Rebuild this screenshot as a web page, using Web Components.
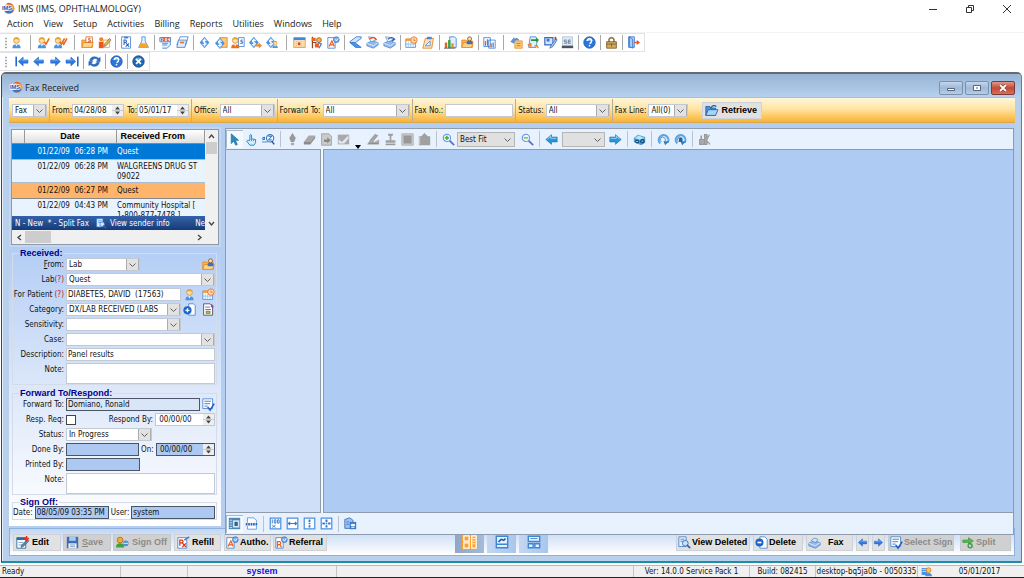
<!DOCTYPE html>
<html lang="en">
<head>
<meta charset="utf-8">
<title>IMS (IMS, OPHTHALMOLOGY)</title>
<style>
html,body{margin:0;height:100%}
body{background:#fff;font:8px/13px "DejaVu Sans Condensed","Liberation Sans",Arial,sans-serif;color:#111}
</style>
</head>
<body>
<ims-app></ims-app>
<script>
/* ---------- icons, all on a 16x16 grid ---------- */
const page='<path d="M3 1h7l3 3v11H3z" fill="#fff" stroke="#3f7fd0"/><path d="M10 1v3h3" fill="#cfe2fa" stroke="#3f7fd0"/>';
const user=(x=0,c='#4a94e0')=>`<g transform="translate(${x})"><path d="M3 15c0-4 2-5 5-5s5 1 5 5z" fill="${c}"/><path d="M6.500 10h3L8 13z" fill="#fff"/><circle cx="8" cy="5.500" r="3.500" fill="#ffdca8" stroke="#d8922a"/><path d="M4.500 5C4 .5 12 .5 11.500 5 10 3.500 6 3.500 4.500 5z" fill="#e8a52c"/></g>`;
const check=(x=0)=>`<path d="M${9+x} 7l2 3 4-7" fill="none" stroke="#ec6a1c" stroke-width="2"/>`;
const dollar='<path d="M8 1l6 7-6 7-6-7z" fill="#4b93e8"/><path d="M10.500 5.500c-4-2-6 1.500-2.500 2.500s2 4-2.500 2.500M8 3v10" fill="none" stroke="#fff" stroke-width="1.300"/>';
const folder='<path d="M1 5h5l1 1h7v8H1z" fill="#ffb545" stroke="#e6821e"/><path d="M1 14l2-6h12l-2 6z" fill="#ffd588" stroke="#e6821e"/>';
const printer='<path d="M1 9l6-3 8 2v3l-6 4-8-3z" fill="#8fb8ee" stroke="#4678c0" stroke-width=".8"/><path d="M1 9l8 3 6-4" fill="none" stroke="#fff" stroke-width=".8"/>';
const cal='<path d="M1 4h12v10H1z" fill="#fff" stroke="#4a86d8"/><path d="M1 3h12v3H1z" fill="#f59a2b"/><path d="M4 7v7M7 7v7M10 7v7M1 10h12" stroke="#7faee8" stroke-width=".8"/>';
const clock='<circle cx="11" cy="5" r="4" fill="#ffd9b0" stroke="#e8701c"/><path d="M11 3v2.500h2" fill="none" stroke="#e8701c"/>';
const mag=s=>`<path d="M9 9l6 6" stroke="#5b70c8" stroke-width="2.200"/><circle cx="6" cy="6" r="4.500" fill="#eaf6ff" stroke="#6c8fe8" stroke-width="1.300"/>${s}`;
const arrow='<path d="M2 8l6-5.500V6h6v4H8v3.500z" fill="#2b78e0" stroke="#1d5fc0" stroke-width=".6"/><path d="M4.500 7.500L7 5v2h6" stroke="#7cb4fa" stroke-width=".8" fill="none"/>';
const teal='<path d="M1 8l7-6v3h7v6H8v3z" fill="#2596d8" stroke="#1c6ea8" stroke-width=".7"/><path d="M3 7.500l4-3.500v2.500h7" fill="none" stroke="#a8e4ff"/>';
const frame='<path d="M1.500 1.500h13v13h-13z" fill="#fff" stroke="#4a90e0" stroke-width="1.500"/>';
const flip=s=>`<g transform="translate(16) scale(-1 1)">${s}</g>`;
const rot='<path d="M4 13A6 6 0 1 1 13 12" fill="none" stroke="#5aa6e0" stroke-width="2.600"/><path d="M5.500 11A3.200 3.200 0 1 1 9.500 10.500" fill="none" stroke="#3a78b8"/><path d="M8 10h7l-5 5z" fill="#2b7fc8"/>';
const I={
logo:'<circle cx="9" cy="8" r="6.500" fill="#f49a4a"/><path d="M3 12q6 5 11-1l-1-3-8 1z" fill="#3b74c8"/><path d="M5 2q5-3 9 2z" fill="#e2622a"/><text x="0" y="10" font-size="7" font-weight="700" fill="#1d4fae" stroke="#fff" stroke-width="1.600" paint-order="stroke">IMS</text>',
userDb:'<path d="M1 3h8v10H1z" fill="#4b8ee0"/><path d="M2 5h6M2 8h6" stroke="#fff"/><circle cx="11" cy="6" r="3.500" fill="#ffc45a" stroke="#c8741c"/><path d="M6 15q0-5 5-5t5 5z" fill="#4b8ee0"/>',
user:user(),
userCheck:user(-2)+check(),
userCheck2:user(-3)+check(-2)+check(1),
folderS:folder+'<path d="M6 1h8v7H6z" fill="#fff" stroke="#d86a20"/><path d="M11.500 3h-2v2h2v2h-3" fill="none" stroke="#e03a1c"/>',
manPencil:'<path d="M1 15V7h6v8z" fill="#e85a1c"/><circle cx="4" cy="4" r="2.500" fill="#f0812a"/><path d="M7 5h7v9H7z" fill="#fff" stroke="#f09a2a"/><path d="M7 13l1-3 6-7 2 2-6 7z" fill="#f7b23c" stroke="#555" stroke-width=".7"/>',
rx:'<path d="M2 1h11v14H2z" fill="#fff" stroke="#3f7fd0"/><path d="M5 1h5v2H5z" fill="#3f7fd0"/><path d="M5 11V5h2q2 1.500 0 3H5m2 0l4 5m0-4l-4 4" fill="none" stroke="#2a62c0" stroke-width="1.300"/>',
rxRed:'<path d="M1 2h11v13H1z" fill="#fff" stroke="#3f7fd0"/><path d="M3.500 12V5h3q2 2 0 3.500h-3m3 0l4.500 5m0-4.500l-4.500 4.500" fill="none" stroke="#d83418" stroke-width="1.500"/><path d="M9 5l6-4" stroke="#3f7fd0" stroke-width="2"/>',
flask:'<path d="M6 1h4v5l4 8H2l4-8z" fill="#eaf4ff" stroke="#3f86dc"/><path d="M4.500 9h7l2.500 5.500H2z" fill="#f8a424"/>',
doc:'<path d="M1 2h13v9l-4 4H4" fill="#e4effd" stroke="#3f7fd0"/><path d="M1 2h13v5H1z" fill="#e4effd" stroke="#3f7fd0"/><path d="M3 3v3M5 3h2v2.500H5zM12 3h-2v2.500h2" stroke="#e0481c" fill="none" stroke-width="1.200"/><path d="M4 9h7M4 11h6" stroke="#3f7fd0"/>',
papers:'<path d="M5 1h10l-3 10H1z" fill="#fff" stroke="#3f7fd0"/><path d="M3 5h10l-2 9H1z" fill="#dcebff" stroke="#3f7fd0"/><path d="M5 8h5" stroke="#e8701c" stroke-width="2"/>',
dollar, dollarDoc:'<path d="M6 2h9v12H6z" fill="#ffc778" stroke="#e8861c"/><g transform="translate(-2 1)">'+dollar+'</g>',
userDollar:'<path d="M8 2h7v11H8z" fill="#fff" stroke="#3f7fd0"/><path d="M13 5h-2v2h2v2h-3" fill="none" stroke="#2458b8"/>'+user(-4,'#e8701c'),
dollarFlag:'<g transform="translate(-2)">'+dollar+'</g><path d="M8 10h4v-2l4 4-4 3v-2H8z" fill="#f08a2a"/>',
dollarUser:'<g transform="translate(-2)">'+dollar+'</g><g transform="translate(6 5) scale(.65)">'+user()+'</g>',
calendar:'<path d="M1 2h14v12H1z" fill="#ffe9c0" stroke="#e6881c"/><path d="M1 2h14v3H1z" fill="#3f86dc"/><path d="M3 7h10M3 9.500h10M3 12h10" stroke="#f2a63a" stroke-dasharray="2 1"/><path d="M6 8h3v3H6z" fill="#d8401c"/>',
puzzle:'<path d="M3 1v14M3 8h5" stroke="#8a4a20" stroke-width="1.500"/><path d="M2 2h5v4H2zM6 9h5v5H6z" fill="#e8602a"/><circle cx="11" cy="5" r="3" fill="#f7b23c" stroke="#a8541c"/><path d="M10 8l4 2-3 5" fill="none" stroke="#3f7fd0" stroke-width="1.500"/>',
docA:'<path d="M1 2h9v13H1z" fill="#fff" stroke="#3f7fd0"/><path d="M2.500 13L6 6l3 7M4 11h4" fill="none" stroke="#e8601c" stroke-width="1.500"/><circle cx="11.500" cy="4.500" r="3.500" fill="#7eb2f2" stroke="#2f6fc8"/><path d="M10 4l1.500 2L14 3" fill="none" stroke="#fff"/>',
docR:'<path d="M1 2h9v13H1z" fill="#fff" stroke="#3f7fd0"/><path d="M3 14V7h3q2 2 0 3.500H3m3 0l2 3.500" fill="none" stroke="#e8601c" stroke-width="1.500"/><circle cx="11.500" cy="4.500" r="3.500" fill="#7eb2f2" stroke="#2f6fc8"/><path d="M10 4l1.500 2L14 3" fill="none" stroke="#fff"/>',
fold:'<path d="M15 1H9L1 7l2 2 5-1 7-5z" fill="#cfe4ff" stroke="#2f70cc"/><path d="M1 8l7 6h7l-8-6z" fill="#4a94e8" stroke="#2f70cc"/>',
printOut:printer+'<path d="M6 7l6-2-2-3-7-1z" fill="#fff" stroke="#3f7fd0" stroke-width=".8"/><path d="M4 4q6-5 9 1" fill="none" stroke="#e8541c" stroke-width="1.800"/>',
printIn:printer+'<path d="M6 7l6-2-2-3-7-1z" fill="#fff" stroke="#3f7fd0" stroke-width=".8"/><path d="M6 4q5-4 8 0l-3 2" fill="none" stroke="#2a5cc0" stroke-width="1.800"/>',
printer:printer+'<path d="M4 6q3-5 8-2l-2 4z" fill="#d4e8fb" stroke="#4678c0" stroke-width=".8"/>',
calClock:cal+clock,
clipClock:'<path d="M4 3h10l-2 12H1z" fill="#ffe0b8" stroke="#e8801c"/><path d="M6 1h6v3H6z" fill="#4a86d8"/><path d="M4 12l6-6v6z" fill="#fff" stroke="#4a86d8"/>',
chart:'<path d="M7 1h6l2 2v11H7z" fill="#e4effd" stroke="#3f7fd0"/><path d="M1 8h3v7H1z" fill="#e8641c"/><path d="M5 5h3v10H5z" fill="#35a246"/><path d="M9 9h3v6H9z" fill="#e09a20"/><path d="M0 15h14" stroke="#555"/>',
folderUser:folder+'<path d="M7 10V7q3-3 7 0v3z" fill="#3b6fc8"/><circle cx="10.500" cy="3.500" r="2.500" fill="#ffd9a8" stroke="#8a5020"/>',
chartDoc:'<path d="M1 2h8v11H1zM7 5h8v10H7z" fill="#fff" stroke="#3f7fd0"/><path d="M3 6v6M10 9v5" stroke="#e8641c" stroke-width="1.600"/><path d="M5.500 4v8M12.500 8v6" stroke="#3f86dc" stroke-width="1.600"/>',
undoDoc:'<path d="M6 6h9v9H6z" fill="#ffd27a" stroke="#e6881c"/><path d="M8 9h5M8 12h5" stroke="#c05a1c"/><path d="M1 7l4-5v2q4-3 6 1-3-1-6 1v3z" fill="#5a96e4" stroke="#2f6fc8" stroke-width=".6"/>',
swap:'<path d="M4 1h7l2 4-2 9H2z" fill="#e4effd" stroke="#3f7fd0"/><path d="M5 4h6V2l4 3-4 3V6H5z" fill="#25963c"/><path d="M9 12h4l1 3M1 11l4-2v4z" fill="#f0a020" stroke="#f0701c"/>',
notePen:'<path d="M1 2h10v9H1z" fill="#d4e6ff" stroke="#3468c0" stroke-width="1.400"/><circle cx="5" cy="5" r="2" fill="#3b74c8"/><path d="M15 3L9 11l-2 4 4-2 5-8z" fill="#9cc4f4" stroke="#2458a8" stroke-width=".8"/><path d="M14 1v4" stroke="#e0301c" stroke-width="2"/>',
se:'<path d="M2 1h12v11H2z" fill="#e1ebf6" stroke="#a9bfd8"/><path d="M1 12h14v3H1z" fill="#4b535e"/><path d="M7 5H4v2h3v2H4M12 5H9v4h3M9 7h3" fill="none" stroke="#56708e"/>',
help:'<circle cx="8" cy="8" r="7" fill="#2a76dc" stroke="#1b51a6"/><path d="M3 6q5-6 10 0z" fill="#79b1f4"/><path d="M5.500 6q0-2.500 2.500-2.500T10.500 6 8 9.500M8 11v2" fill="none" stroke="#fff" stroke-width="1.800"/>',
lock:'<path d="M5 8V4q3-4 6 0v4" fill="none" stroke="#8c7a5a" stroke-width="2"/><path d="M2 7h12v8H2z" fill="#d3a95a" stroke="#7a5a28"/><path d="M2 10h12M8 9v4" stroke="#7a5a28"/>',
exit:'<path d="M2 1h7v13H2z" fill="#b8d6fb" stroke="#2f70cc"/><path d="M3 1l4 3v11l-4-2z" fill="#a8ccf8" stroke="#2f70cc"/><path d="M9 7h3V5l4 3-4 3V9H9z" fill="#e8541c"/>',
prev:arrow,next:flip(arrow),
first:'<path d="M1.500 2v12" stroke="#2369c8" stroke-width="2"/><g transform="translate(2)">'+arrow+'</g>',
last:flip('<path d="M1.500 2v12" stroke="#2369c8" stroke-width="2"/><g transform="translate(2)">'+arrow+'</g>'),
refresh:'<path d="M2 7q1-5 6-5 3 0 5 2l2-1v5h-5l2-2q-4-4-7 1zM14 9q-1 5-6 5-3 0-5-2l-2 1V8h5l-2 2q4 4 7-1z" fill="#2470c8" stroke="#164f98" stroke-width=".5"/>',
close:'<circle cx="8" cy="8" r="7" fill="#1f6ab8" stroke="#12427e"/><path d="M3 6q5-6 10 0z" fill="#6aaade"/><path d="M5 5l6 6M11 5l-6 6" stroke="#fff" stroke-width="2"/>',
retrieve:'<path d="M1 3h5l1 2h6v9H1z" fill="#4b92d8" stroke="#1f5fa8"/><path d="M1 14l3-7h12l-3 7z" fill="#a8d4f6" stroke="#1f5fa8"/><path d="M7 5q3-5 7-2" fill="none" stroke="#1f5fa8" stroke-width="1.500"/>',
cursor:'<path d="M4 1v12l3-3 2.500 5 2-1L9 9h4z" fill="#2a8cc0" stroke="#1a6490" stroke-width=".8"/>',
hand:'<path d="M6 9V2.500q1-1.500 2 0V7l5 1v4l-2 3H6L2 10l1-1z" fill="#d4ecff" stroke="#2f88c8" stroke-width="1.200"/><path d="M8 7v3M10.500 8v2" stroke="#2f88c8"/>',
find:'<path d="M1 8q-1-3 2-3v3zM8 4h4L8 8.500h4" fill="none" stroke="#2c6ca8" stroke-width="1.200"/><circle cx="10" cy="6.500" r="4.500" fill="none" stroke="#3378c0" stroke-width="1.300"/><path d="M12 10l3 4" stroke="#2c5a98" stroke-width="2"/><path d="M0 11h7" stroke="#3378c0"/>',
pen:'<path d="M8 0l4 6-2 5H6L4 6z" fill="#999"/><path d="M6 12h4v3H6z" fill="#aaa"/>',
eraser:'<path d="M7 3h8l-6 8H1z" fill="#a8a8a8"/><path d="M1 11h8v3H1zM9 11l6-8v3l-6 8z" fill="#8c8c8c"/>',
pageGray:'<path d="M2 1h9l3 3v11H2z" fill="#ccc" stroke="#999"/><path d="M5 8h4V5l4 4-4 4v-2H5z" fill="#888"/>',
imgGray:'<path d="M1 2h14v12H1z" fill="#aaa"/><path d="M2 8l4 3 8-8v4l-5 6H2z" fill="#e3e9f1"/>',
signGray:'<path d="M3 9L10 1l4 2-6 7z" fill="#a3a3a3"/><path d="M0 14l5-7 4 4 6-3v6z" fill="#a8a8a8"/><path d="M2 13h12" stroke="#888"/>',
stamp:'<path d="M5 1h6v2L9 4v5h5v3H2V9h5V4L5 3z" fill="#a0a0a0"/><path d="M2 13h12v2H2z" fill="#999"/>',
square:'<path d="M1 1h14v14H1z" fill="#ccc" stroke="#aaa"/><path d="M3 3h10v10H3z" fill="#989898"/>',
clipGray:'<path d="M1 4h3l4-4 4 4h3v11H1z" fill="#a0a0a0"/><path d="M2 5v9" stroke="#ddd"/>',
zoomIn:mag('<path d="M6 3.500v5M3.500 6h5" stroke="#4cb830" stroke-width="2"/>'),
zoomOut:mag('<path d="M3.500 6h5" stroke="#7cc850" stroke-width="2"/>'),
tealL:teal,tealR:flip(teal),
bino:'<path d="M1 6l5-4 9 3v7l-5 3-9-4z" fill="#4a9fd6"/><path d="M2 6l5-3 7 3-4 3z" fill="#b9e4fa"/><circle cx="5" cy="10.500" r="2.500" fill="#155080"/><circle cx="11.500" cy="10" r="2.800" fill="#155080"/><path d="M4 10.500h2M10.500 10h2" stroke="#fff"/>',
rotA:rot,rotB:rot+'<path d="M6 6h4v5H6z" fill="#2a5f98"/>',
tools:'<path d="M2 8h6v6H2zM8 2h3v12H8zM11 8l3-6M11 10l4 4" fill="#aaa" stroke="#999" stroke-width="1.400"/><path d="M4 3v5" stroke="#999" stroke-width="2"/>',
thumbs:'<path d="M1 1h14v14H1z" fill="#4b86b4"/><path d="M6 4h8v9H6z" fill="#cfe4f4"/><path d="M2 4h3M2 7h3M2 10h3M2 13h3" stroke="#e8f4ff"/><path d="M8 6h4v5H8z" fill="#345f88"/>',
pan:'<path d="M3 7V1h8l3 3v3M3 11v4h11v-4" fill="#fff" stroke="#4a90e0"/><path d="M1 9h2M4 9h2M7 9h2M10 9h2M13 9h2" stroke="#2a62b8" stroke-width="3"/>',
p100:frame+'<path d="M4 3v5M6.500 3.500h2v4h-2zM10.500 3.500h2v4h-2zM4 13l4-3M8 13l-4-3" fill="none" stroke="#3478c8" stroke-width="1.100"/>',
fitW:frame+'<path d="M3 8h10M5 6L3 8l2 2M11 6l2 2-2 2" fill="none" stroke="#2f78cc" stroke-width="1.400"/>',
fitH:frame+'<path d="M8 3v3M8 7v2M8 10v3" stroke="#2f78cc" stroke-width="2.200"/>',
fit:frame+'<path d="M8 3v3M8 10v3M3 8h3M10 8h3" stroke="#2f78cc" stroke-width="2.400"/><path d="M7 7h2v2H7z" fill="#2f78cc"/>',
faxSave:'<path d="M1 3l6-2 4 3v10H1z" fill="#9cc4f4" stroke="#3468b8"/><path d="M7 6h8v9H7z" fill="#3b78c8"/><path d="M9 9h4v2H9zM9 13h4" fill="#fff" stroke="#fff"/><path d="M3 6h3M3 9h3" stroke="#3468b8"/>',
sheetFind:'<path d="M1 1h9v12H1z" fill="#e4effd" stroke="#3f7fd0"/><path d="M3 4h5M3 6.500h4" stroke="#3f7fd0"/><circle cx="9" cy="9" r="3.500" fill="#c8e4ff" stroke="#2c64b0"/><path d="M11 11l4 4" stroke="#2c64b0" stroke-width="2"/>',
edit:'<path d="M1 2h11v13H1z" fill="#fff" stroke="#235c94"/><path d="M1 2h11v3H1z" fill="#2c6ca0"/><path d="M3 8h6M3 11h5" stroke="#6a96c0"/><path d="M14 4l-7 7-1 3 3-1 7-7z" fill="#4a88b8" stroke="#234" stroke-width=".5"/><path d="M13 0v6M10 3h6" stroke="#e03020" stroke-width="1.800"/>',
save:'<path d="M1 1h14v14H1z" fill="#3b6cb4"/><path d="M4 1h8v5H4z" fill="#a8c8ee"/><path d="M3 9h10v6H3z" fill="#e8f0fa"/><path d="M5 11h6M5 13h6" stroke="#7c98c0"/>',
signoff:'<circle cx="5" cy="5" r="3.500" fill="#e8b23c" stroke="#a86a1c"/><path d="M0 14q0-5 5-5t5 5z" fill="#40a048"/><circle cx="12" cy="9" r="3.500" fill="#4a90d8"/><path d="M9 9h6" stroke="#fff"/>',
del:'<path d="M6 1h6l3 3v11H6z" fill="#fff" stroke="#3f7fd0"/><circle cx="5.500" cy="8" r="5" fill="#1f64c8"/><path d="M3 8h5" stroke="#fff" stroke-width="2"/>',
add:'<path d="M7 1h6l2 2v12H7z" fill="#fff" stroke="#3f7fd0"/><circle cx="5.500" cy="9" r="5" fill="#1f64c8"/><path d="M3 9h5M5.500 6.500v5" stroke="#fff" stroke-width="1.600"/>',
sheet:'<path d="M2 1h8l3 3v11H2z" fill="#fff" stroke="#444"/><path d="M4 5h6M4 8h7" stroke="#3468c0"/><path d="M5 10h5v3H5z" fill="#c8b040" stroke="#444" stroke-width=".6"/><path d="M11 1l3 2v3l-3-1z" fill="#a040c0"/>',
docCheck:'<path d="M1 1h12v12H1z" fill="#fff" stroke="#3f7fd0"/><path d="M3 4h8M3 7h7M3 10h4" stroke="#3f7fd0" stroke-width="1.200"/><path d="M7 11l3 4 5-8" fill="none" stroke="#1f62c8" stroke-width="2"/>',
split:'<path d="M1 5h7V2l6 4-6 4V8H1zM8 8l6 6" fill="#5cb84a" stroke="#2f8a3a" stroke-width=".7"/><circle cx="10" cy="12" r="2.500" fill="none" stroke="#3f9a48" stroke-width="1.500"/>',
lay1:'<g fill="none" stroke="#fff" stroke-width="1.500"><path d="M1 1h6v6H1zM1 9h6v6H1zM10 1h5v14h-5z"/></g><path d="M11 4h3M11 7h3M11 10h3" stroke="#fff"/>',
lay2:'<path d="M1.500 1.500h13v9h-13zM1.500 10.500h13v4h-13z" fill="#e4f1ff" stroke="#3c86d4" stroke-width="1.600"/><path d="M4 8l3-3 3 1 2-2" fill="none" stroke="#1f5a98" stroke-width="1.800"/>',
lay3:'<path d="M1.500 1.500h13v6h-13zM1.500 10h5.500v4.500H1.500zM9 10h5.500v4.500H9z" fill="#e4f1ff" stroke="#3c86d4" stroke-width="1.600"/><path d="M4 4h8" stroke="#3c86d4"/>',
grip:'<path d="M8 1v2M8 5v2M8 9v2M8 13v2" stroke="#8a8f98" stroke-width="2"/>'
};
customElements.define('ims-icon',class extends HTMLElement{
 constructor(){super();this.attachShadow({mode:'open'})}
 connectedCallback(){this.shadowRoot.innerHTML=`<style>:host{display:block;flex:none;width:var(--icon,13px);height:var(--icon,13px)}svg{display:block;width:100%;height:100%;overflow:visible;font-family:"Liberation Sans",sans-serif}</style><svg viewBox="0 0 16 16" aria-hidden="true">${I[this.getAttribute('name')]||''}</svg>`}
});

/* ---------- styles that every panel uses ---------- */
const chev=(box)=>`url("data:image/svg+xml,%3Csvg xmlns='http://www.w3.org/2000/svg' width='13' height='13'%3E${box?"%3Crect x='.5' y='.5' width='12' height='12' fill='%23e2e2e2' stroke='%23adadad'/%3E":""}%3Cpath d='M3.500 5.500l3 3 3-3' fill='none' stroke='%23606060'/%3E%3C/svg%3E")`;
const spin=`url("data:image/svg+xml,%3Csvg xmlns='http://www.w3.org/2000/svg' width='11' height='11'%3E%3Crect width='11' height='11' fill='%23eee'/%3E%3Cpath d='M0 5.500h11' stroke='%23ccc'/%3E%3Cpath d='M3 4.500L5.500 1.500l2.500 3zM3 6.500l2.500 3 2.500-3z' fill='%23444'/%3E%3C/svg%3E")`;
const base=`
*{box-sizing:border-box}
button,input,select,textarea{font:inherit;color:inherit;margin:0;padding:0;border-radius:0;outline:0}
input,textarea,select{background-color:#fff;border:1px solid #c3c9d2;height:13px;line-height:11px;min-width:0;display:block;white-space:pre}
input{padding:0 1px}
textarea{resize:none;overflow:hidden}
select{appearance:none;padding:0 13px 0 2px;background:#fff ${chev(true)} right center no-repeat}
.spin{background:#fff ${spin} right center no-repeat;padding-right:11px}
label{white-space:nowrap}
button{display:flex;align-items:center;background:none;border:0}
.cmd{--icon:13px;height:17px;padding:0 3px 0 2px;gap:3px;background:#e1e1e1;border:1px solid #cdd2d9;font:700 9px/13px "Liberation Sans",Arial,sans-serif;color:#000;white-space:nowrap}
.cmd:disabled{background:#d0d0d0;border-color:#c6c9ce;color:#8a8a8a}
`;
const define=(name,css,html)=>{
 const t=document.createElement('template');
 t.innerHTML=`<style>${base}${css}</style>${html}`;
 customElements.define(name,class extends HTMLElement{
  constructor(){super();this.attachShadow({mode:'open'}).append(t.content.cloneNode(true))}
 });
};
const icon=n=>`<ims-icon name="${n}"></ims-icon>`;
const tool=(n,l)=>`<button type="button" aria-label="${l||n}">${icon(n)}</button>`;
const tools=s=>s.split(' ').map(n=>n==='|'?'<i></i>':n==='||'?'<i class="wide"></i>':tool(n)).join('');

/* ---------- application frame ---------- */
define('title-bar',`
:host{display:flex;align-items:center;height:17px;padding:0 0 0 2px;gap:3px;font:9px/13px "Open Sans",sans-serif;color:#222}
h1{font:inherit;margin:0;flex:1}
button{width:34px;height:16px;justify-content:center}
svg{display:block;fill:none;stroke:#333}
`,`${icon('logo')}<h1><slot></slot></h1>
<button aria-label="Minimize"><svg width="10" height="10"><path d="M1 5.500h8"/></svg></button>
<button aria-label="Restore"><svg width="10" height="10"><path d="M1.500 3.500h5v5h-5zM3.500 3v-1.500h5v5H7"/></svg></button>
<button aria-label="Close"><svg width="10" height="10"><path d="M1 1l8 8M9 1l-8 8"/></svg></button>`);

define('menu-bar',`
:host{display:block;height:16px;border-bottom:1px solid #f3f3f3;font:9px/14px "Open Sans",sans-serif;color:#222}
nav{display:flex;gap:10px;padding-left:7px}
a{color:inherit;text-decoration:none}
`,`<nav>${['Action','View','Setup','Activities','Billing','Reports','Utilities','Windows','Help'].map(m=>`<a href="#">${m}</a>`).join('')}</nav>`);

customElements.define('tool-strip',class extends HTMLElement{
 constructor(){super();this.attachShadow({mode:'open'})}
 connectedCallback(){this.shadowRoot.innerHTML=`<style>${base}
:host{display:flex;width:max-content;height:19px;align-items:center;border:1px solid #e2e2e2;border-left:0;padding-right:2px;--icon:13px}
.grip{width:8px;--icon:12px}button{width:17px;height:17px;justify-content:center}
i{width:1px;height:15px;background:#a8a8a8;margin:0 2px}i.wide{margin:0 4px 0 5px}
:host([wide-grip]) .grip{margin-right:5px}</style><span class="grip">${icon('grip')}</span>${tools(this.getAttribute('items'))}`}});

/* ---------- filters ---------- */
define('filter-bar',`
:host{display:flex;height:26px;align-items:center;border-top:1px solid #f3b54a;border-bottom:1px solid #d8a850;background:linear-gradient(#fff6dc,#ffe5a4 45%,#fbb232);padding:0 3px}
label{margin-right:2px}
label.tight{margin-right:0}
i{width:1px;height:23px;background:#b9ad92;margin:0 2px}
.fax{width:35px}.date{width:52px}
.from{margin-right:3px}
.office{width:55px}.fwd{width:87px}.no{width:68px}.status{width:64px}.line{width:40px}
.cmd{margin-left:14px;width:60px}
`,`<select class="fax" aria-label="Kind"><option>Fax</option></select><i></i>
<label class="tight" for="f">From:</label><input class="date from spin" id="f" value="04/28/08">
<label class="tight" for="t">To:</label><input class="date spin" id="t" value="05/01/17"><i></i>
<label for="o">Office:</label><select class="office" id="o"><option>All</option></select><i></i>
<label for="w">Forward To:</label><select class="fwd" id="w"><option>All</option></select><i></i>
<label for="n">Fax No.:</label><input class="no" id="n"><i></i>
<label for="s">Status:</label><select class="status" id="s"><option>All</option></select><i></i>
<label for="l">Fax Line:</label><select class="line" id="l"><option>All(0)</option></select>
<button class="cmd">${icon('retrieve')}Retrieve</button>`);

/* ---------- list of faxes ---------- */
define('fax-list',`
:host{display:grid;grid-template:1fr 14px / 1fr 13px;height:116px;border:1px solid #8c99aa;background:#f0f0f0;outline:2px solid #c2d6f2}
.view{display:flex;flex-direction:column;min-height:0;min-width:0;overflow:hidden}
.rows{flex:1;overflow:hidden;background:#fff}
table{border-collapse:collapse;table-layout:fixed;width:100%}
th{height:13px;padding:0 0 0 4px;background:linear-gradient(#fff,#dedede);border-right:1px solid #999;border-bottom:1px solid #888;font:700 9px/12px "Liberation Sans",Arial,sans-serif;color:#000;text-align:left}
th.d{text-align:center;padding:0}
td{padding:2px 0 0 1px;line-height:10px;vertical-align:top;white-space:pre;border-bottom:1px solid #a9bdd3;overflow:hidden}
td.d{text-align:right;padding-right:8px}
tr.one td{height:16px;line-height:11px}tr.two td{height:23px}
tbody tr{background:#e9f3fe}
tbody tr.sel{background:#0078d7;color:#fff}
tbody tr.hot{background:#ffb46c}
tr.hot td{border-color:#888}
.foot{display:flex;align-items:center;height:14px;flex:none;background:linear-gradient(#3563a8,#163a78);color:#fff;padding-left:3px;white-space:pre;overflow:hidden;--icon:11px}
.foot ims-icon{margin:0 3px 0 7px}
.foot b{font-weight:400;margin-left:auto}
.bar{display:flex;align-items:center;justify-content:space-between}
.v{flex-direction:column;padding:3px 0}
.v u{width:11px;height:12px;background:#cdcdcd;margin:3px 0 auto}
.h{padding:0 15px 0 4px;grid-column:1/3}
.h u{width:26px;height:12px;background:#cdcdcd;margin:0 auto 0 3px}
svg{fill:none;stroke:#444;stroke-width:1.300}
`,`<div class="view"><div class="rows"><table>
<colgroup><col style="width:12px"><col style="width:92px"><col></colgroup>
<thead><tr><th></th><th class="d">Date</th><th>Received From</th></tr></thead>
<tbody>
<tr class="one sel"><td></td><td class="d">01/22/09  06:28 PM</td><td>Quest</td></tr>
<tr class="two"><td></td><td class="d">01/22/09  06:28 PM</td><td>WALGREENS DRUG ST
09022</td></tr>
<tr class="one hot"><td></td><td class="d">01/22/09  06:27 PM</td><td>Quest</td></tr>
<tr class="two"><td></td><td class="d">01/22/09  04:43 PM</td><td>Community Hospital [
1-800-877-7478 ]</td></tr>
</tbody></table></div>
<div class="foot">N - New  * - Split Fax${icon('sheetFind')}View sender info<b>Ne</b></div></div>
<div class="bar v"><svg width="7" height="6"><path d="M1 5l2.500-3L6 5"/></svg><u></u><svg width="7" height="6"><path d="M1 1l2.500 3L6 1"/></svg></div>
<div class="bar h"><svg width="6" height="7"><path d="M5 1L2 3.500 5 6"/></svg><u></u><svg width="6" height="7"><path d="M1 1l3 2.500L1 6"/></svg></div>`);

/* ---------- details form ---------- */
define('fax-form',`
:host{display:block;padding:1px 4px 2px 3px;background:linear-gradient(#b3cdf5,#dce7fa 50%,#fff)}
fieldset{margin:0;padding:0 1px 0 0;border:1px solid #d3dce8;min-width:0;display:grid;grid-template-columns:51px minmax(0,1fr);column-gap:2px;row-gap:2px}
legend{font:700 9px/10px "Liberation Sans",Arial,sans-serif;color:#00008b;padding:0 1px;margin-left:6px}
label{text-align:right;justify-self:end;line-height:13px}
fieldset>div{display:flex;align-items:center;gap:2px}
.ic{--icon:13px;width:13px;height:13px}
.w{width:100%}
textarea{height:21px;width:100%}
em{font-style:normal;color:#b22}
.dark{border-color:#4a5668;background-color:#adc9f2}
.pale{background-color:#d9e6f8}
.end{margin-left:auto}
input[type=checkbox]{appearance:none;width:10px;height:10px;border:1px solid #444;background:#fff}
.g2{margin-top:3px}
.sign{display:flex;gap:2px;margin-top:3px}
.sign legend{line-height:8px}
.fwd{width:136px}
`,`<fieldset><legend>Received:</legend>
<label for="a"><u>F</u>rom:</label><div><select id="a" style="width:74px"><option>Lab</option></select><button class="ic end" aria-label="Patient folder">${icon('folderUser')}</button></div>
<label for="b">Lab<em>(?)</em></label><div><select id="b" class="w"><option>Quest</option></select></div>
<label for="c">For Patient <em>(?)</em></label><div><input id="c" style="width:115px" value="DIABETES, DAVID  (17563)"><button class="ic" aria-label="Patient">${icon('user')}</button><button class="ic end" aria-label="Schedule">${icon('calClock')}</button></div>
<label for="d">Category:</label><div><select id="d" style="width:115px"><option>DX/LAB RECEIVED (LABS</option></select><button class="ic" aria-label="Add">${icon('add')}</button><button class="ic end" aria-label="Sheet">${icon('sheet')}</button></div>
<label for="e">Sensitivity:</label><div><select id="e" style="width:115px"><option></option></select></div>
<label for="f">Case:</label><div><select id="f" class="w"><option></option></select></div>
<label for="g">Description:</label><div><input id="g" class="w" value="Panel results"></div>
<label for="h">Note:</label><div><textarea id="h"></textarea></div>
</fieldset>
<fieldset class="g2"><legend>Forward To/Respond:</legend>
<label for="i">Forward To:</label><div><input id="i" class="dark pale fwd" value="Domiano, Ronald"><button class="ic" aria-label="Choose">${icon('docCheck')}</button></div>
<label for="j">Resp. Req:</label><div><input type="checkbox" id="j"><label class="end" for="k">Respond By:</label><input id="k" class="spin" style="width:60px" value=" 00/00/00"></div>
<label for="l">Status:</label><div><select id="l" style="width:86px"><option>In Progress</option></select></div>
<label for="m">Done By:</label><div><input id="m" class="dark" style="width:74px"><label class="end" for="n">On:</label><input id="n" class="spin dark" style="width:60px" value=" 00/00/00"></div>
<label for="o">Printed By:</label><div><input id="o" class="dark" style="width:74px"></div>
<label for="p">Note:</label><div><textarea id="p"></textarea></div>
</fieldset>
<fieldset class="sign"><legend>Sign Off:</legend>
<label for="q">Date:</label><input id="q" class="dark" style="width:74px" value="08/05/09 03:35 PM"><label for="r">User:</label><input id="r" class="dark" style="flex:1" value="system">
</fieldset>`);

/* ---------- image viewer ---------- */
define('fax-viewer',`
:host{display:flex;flex-direction:column;border:1px solid #8f9cae;background:#e8f2fe;min-width:0}
.bar{display:flex;align-items:center;height:20px;flex:none;--icon:13px}
.bar button{width:17px;height:18px;justify-content:center}
.bar i{width:1px;height:16px;background:#b9c3d0;margin:0 3px}
.bar button.on{background:#f4f9ff;box-shadow:inset 1px 1px #a8b8cc}
.bar select{height:15px;background:#e0e0e0 ${chev(false)} right center no-repeat;border-color:#b5b5b5}
.zoom{width:58px;margin-right:4px}
.pageno{width:43px;margin:0 2px}
.drop{align-self:flex-end;width:7px;margin:0 3px}
.panes{flex:1;display:grid;grid-template-columns:95px 1fr;gap:2px;background:#f4f7fc}
.panes div{border:1px solid #8f9cae;border-left-width:0;background:#aecbf3}
.panes div+div{border-left-width:1px;border-right:0}
.panes div:first-child{background:#cfdff8}
.low{height:21px}
`,`<div class="bar">${tools('cursor hand find | pen eraser pageGray imgGray').replace('<button','<button class="on"')}<svg class="drop" width="7" height="4"><path d="M0 0h6L3 4z"/></svg>${tools('signGray stamp square clipGray | zoomIn')}
<select class="zoom" aria-label="Zoom"><option>Best Fit</option></select>${tools('zoomOut | tealL')}
<select class="pageno" aria-label="Page"><option></option></select>${tools('tealR | bino | rotA rotB | tools')}</div>
<div class="panes"><div></div><div></div></div>
<div class="bar low">${tools('thumbs pan | p100 fitW fitH fit | faxSave').replace('<button','<button class="on"')}</div>`);

/* ---------- commands at the bottom of the fax window ---------- */
define('action-bar',`
:host{display:flex;align-items:center;padding:0 3px;gap:2px;border:1px solid #8fb0dc;background:linear-gradient(#c2d7f4,#fff)}
.e{width:48px}.s{width:48px}.so{width:58px;margin-right:1px}.r{width:47px;margin-right:1px;gap:2px}.a{width:47px}.f{width:54px}
.cmd.a,.cmd.f{gap:1px;padding:0 0 0 1px}
.mid,.right{display:flex;align-items:center}
.mid{margin-left:126px;gap:3px}
.mid button{width:29px;height:21px;justify-content:center;background:linear-gradient(90deg,#c3d7f2,#a9c6ec);--icon:14px}
.mid .on{background:linear-gradient(90deg,#8fa6c6,#a5bbd8)}
.mid .on ims-icon{background:#ffa02c;outline:1px solid #ffa02c}
.right{margin-left:auto;gap:3px}
.right .cmd{gap:1px;padding:0 0 0 1px}
.right .ar{width:13px;padding:0;justify-content:center;--icon:11px}
.vd{width:74px}.de{width:50px}.fx{width:47px}.right .fx{gap:7px}.ss{width:66px}.sp{width:51px;margin-left:3px}
`,`<button class="cmd e">${icon('edit')}Edit</button><button class="cmd s" disabled>${icon('save')}<span><u>S</u>ave</span></button><button class="cmd so" disabled>${icon('signoff')}Sign Off</button><button class="cmd r">${icon('rxRed')}Refill</button><button class="cmd a">${icon('docA')}Autho.</button><button class="cmd f">${icon('docR')}Referral</button>
<div class="mid"><button class="on" aria-label="Split layout">${icon('lay1')}</button><button aria-label="Single layout">${icon('lay2')}</button><button aria-label="Stacked layout">${icon('lay3')}</button></div>
<div class="right"><button class="cmd vd">${icon('sheetFind')}View Deleted</button><button class="cmd de">${icon('del')}Delete</button><button class="cmd fx">${icon('printer')}Fax</button><button class="cmd ar" aria-label="Previous">${icon('prev')}</button><button class="cmd ar" aria-label="Next">${icon('next')}</button><button class="cmd ss" disabled>${icon('docCheck')}Select Sign</button><button class="cmd sp" disabled>${icon('split')}Split</button></div>`);

/* ---------- child window ---------- */
define('fax-window',`
:host{display:flex;flex-direction:column;border:1px solid #3f474f;border-top:2px solid #666b72;border-right-color:#1d9db4;border-bottom:2px solid #1d8ea4;border-radius:5px 5px 0 0;background:#b8d0ec;padding:0 6px 5px 7px;box-shadow:inset 1px 1px #e4eefa}
header{display:flex;align-items:center;height:23px;gap:2px;margin:0 -6px 0 -7px;padding:4px 6px 0 8px;background:linear-gradient(#98b4d4,#b6d0ee);border-radius:4px 4px 0 0;font:9px/13px "Open Sans",sans-serif;color:#222}
h2{font:inherit;margin:0;flex:1}
header button{width:24px;height:14px;justify-content:center;border:1px solid #7b90ac;border-radius:2px;background:linear-gradient(#c3d6ec,#9fb9d8 50%,#b5cce8)}
header button.x{background:linear-gradient(#e09a88,#c44a34 50%,#d4705c);border-color:#7a3a38}
main{flex:1;display:grid;grid-template:1fr 7px 21px / 215px 1fr;background:#b4cef2}
.left{grid-area:1/1;display:flex;flex-direction:column;padding:6px 3px 0 0}
fax-list{margin:0 2px 2px}
fax-viewer{grid-area:1/2/3/3;margin:5px 1px 0 1px;z-index:1}
action-bar{grid-area:2/1/4/3}
fax-form{flex:1;margin-bottom:2px}
svg{display:block}
`,`<header>${icon('logo')}<h2><slot></slot></h2>
<button aria-label="Minimize"><svg width="10" height="8"><path d="M1.500 4.500h7v2h-7z" fill="#fff" stroke="#56657a"/></svg></button>
<button aria-label="Maximize"><svg width="10" height="8"><path d="M1.500 1.500h7v5h-7z" fill="#fff" stroke="#56657a"/><path d="M4 3.500h2v1H4z" fill="#56657a"/></svg></button>
<button class="x" aria-label="Close"><svg width="10" height="8"><path d="M2 1l6 6M8 1L2 7" stroke="#733" stroke-width="3"/><path d="M2 1l6 6M8 1L2 7" stroke="#fff" stroke-width="1.800"/></svg></button></header>
<filter-bar></filter-bar>
<main><div class="left"><fax-list></fax-list><fax-form></fax-form></div><fax-viewer></fax-viewer><action-bar></action-bar></main>`);

define('status-bar',`
:host{display:flex;height:13px;border-top:1px solid #b8b8b8;border-bottom:1px solid #222;background:#f0f0f0;margin-top:2px;--icon:11px;line-height:11px;white-space:nowrap}
span{border-right:1px solid #c4c4c4;padding:0 2px;text-align:center}
.ready{width:121px;text-align:left}.gap{width:67px}
.user{width:149px;font:700 9px/11px "Liberation Sans",Arial,sans-serif;color:#1414e6}
.fill{flex:1}
.ver{width:116px}.build{width:66px}.host{width:102px;padding:0}.ic{width:17px;padding:0 3px;border:0}.day{width:89px;border:0}
`,`<span class="ready">Ready</span><span class="gap"></span><span class="user">system</span><span class="fill"></span><span class="ver">Ver: 14.0.0 Service Pack 1</span><span class="build">Build: 082415</span><span class="host">desktop-bq5ja0b - 0050335</span><span class="ic">${icon('userDb')}</span><span class="day">05/01/2017</span>`);

define('ims-app',`
:host{display:flex;flex-direction:column;min-height:100vh;background:#fff}
fax-window{flex:1;margin:1px 2px 0 1px}
`,`<title-bar>IMS (IMS, OPHTHALMOLOGY)</title-bar><menu-bar></menu-bar>
<tool-strip items="user || userCheck userCheck2 || folderS manPencil | rx flask | doc papers | dollar dollarDoc userDollar dollarFlag dollarUser || calendar puzzle docA | fold printOut printIn | calClock clipClock | chart folderUser | chartDoc || undoDoc swap notePen se | help | lock | exit"></tool-strip>
<tool-strip wide-grip items="first prev next last | refresh | help | close"></tool-strip>
<fax-window>Fax Received</fax-window><status-bar></status-bar>`);
</script>
</body>
</html>
